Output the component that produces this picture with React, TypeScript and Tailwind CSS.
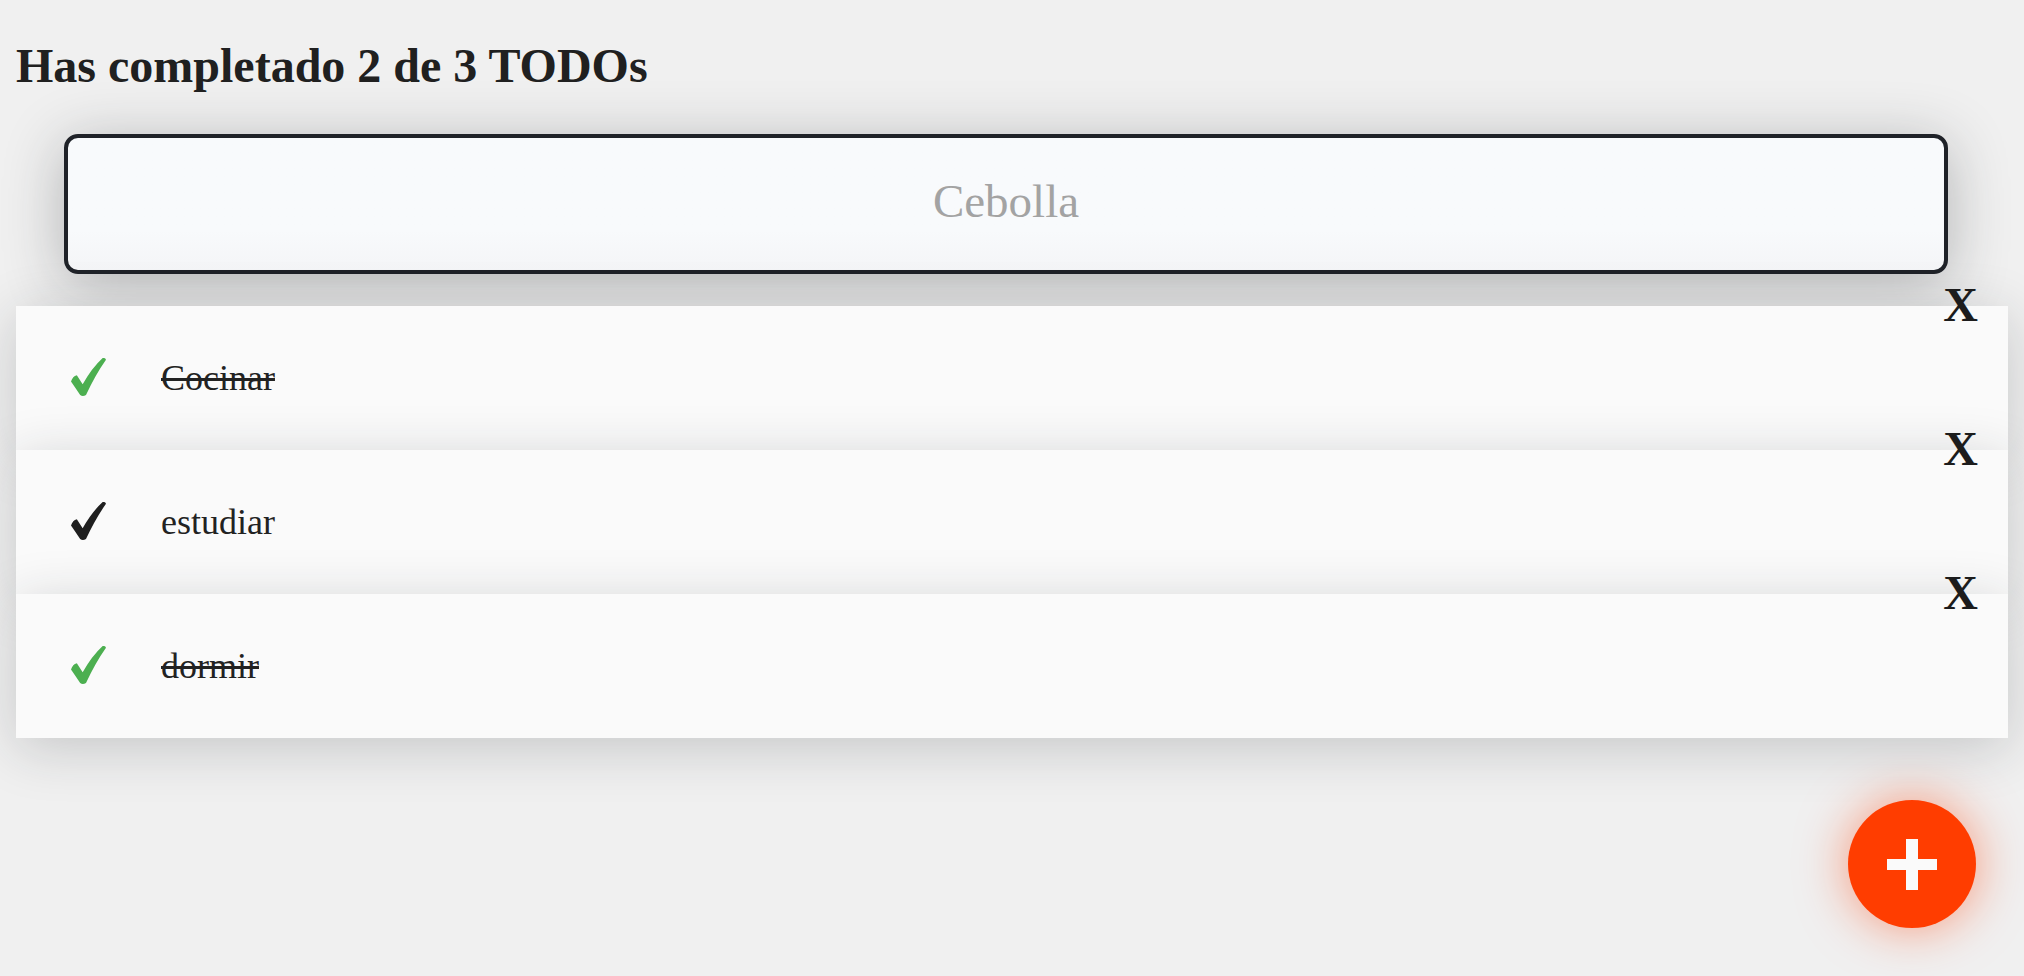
import React from 'react'

interface Todo {
  text: string
  completed: boolean
}

const todos: Todo[] = [
  { text: 'Cocinar', completed: true },
  { text: 'estudiar', completed: false },
  { text: 'dormir', completed: true },
]

// brush-style heavy check mark, like the ✔ glyph in the design
const Check: React.FC<{ color: string }> = ({ color }) => (
  <svg
    width="35"
    height="38"
    viewBox="0 0 84 84"
    preserveAspectRatio="none"
    className="mb-[2px] mr-[55px] shrink-0"
  >
    <path
      d="M0 52 Q4 40 14 38 L28 58 Q50 22 76 0 Q82 -1 84 4 Q58 38 36 82 Q28 86 22 82 Q12 68 0 52 Z"
      fill={color}
    />
  </svg>
)

const TodoItem: React.FC<{ todo: Todo }> = ({ todo }) => {
  return (
    <li className="relative flex h-[144px] items-center bg-[#fafafa] pl-[55px] shadow-[0_10px_55px_rgba(32,35,41,0.2)]">
      <Check color={todo.completed ? '#4caf50' : '#1f1f1f'} />
      <p
        className={
          todo.completed
            ? 'text-[36px] text-[#222] line-through decoration-[#222]'
            : 'text-[36px] text-[#222]'
        }
      >
        {todo.text}
      </p>
      <span className="absolute right-[30px] top-[-25px] text-[48px] font-bold leading-none text-[#1c1c1c]">
        X
      </span>
    </li>
  )
}

const App: React.FC = () => {
  const done = todos.filter((t) => t.completed).length

  return (
    <div className="min-h-screen bg-[#f0f0f0] px-4 pt-[39px] font-['Liberation_Serif',serif]">
      <h1 className="text-[48px] font-bold leading-[53px] text-[#202020]">
        Has completado {done} de {todos.length} TODOs
      </h1>

      <input
        placeholder="Cebolla"
        className="ml-12 mt-[42px] block h-[140px] w-[1884px] rounded-[14px] border-4 border-[#1f2228] bg-gradient-to-b from-[#f8fafc] from-70% to-[#f4f5f7] pb-[6px] text-center text-[47px] shadow-[0_10px_60px_rgba(32,35,41,0.3)] outline-none placeholder:text-[#a3a3a3]"
      />

      <ul className="mt-8">
        {todos.map((todo) => (
          <TodoItem key={todo.text} todo={todo} />
        ))}
      </ul>

      <button className="fixed bottom-12 right-12 flex h-32 w-32 items-center justify-center rounded-full bg-[#ff3d00] shadow-[0_0_50px_rgba(255,61,0,0.5)]">
        <svg width="50" height="51" viewBox="0 0 50 51">
          <rect x="0" y="20" width="50" height="11" fill="#fafafa" />
          <rect x="19" y="0" width="12" height="51" fill="#fafafa" />
        </svg>
      </button>
    </div>
  )
}

export default App
